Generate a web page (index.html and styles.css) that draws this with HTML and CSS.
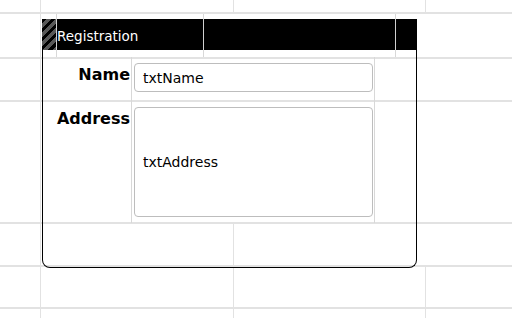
FILE: index.html
```html
<!DOCTYPE html>
<html>
<head>
<meta charset="utf-8">
<link rel="stylesheet" href="styles.css">
</head>
<body>
<div class="canvas">
  <div class="panel">
    <div class="header">
      <div class="grip"></div>
      <div class="hcell title">Registration</div>
      <div class="hcell"></div>
      <div class="hcell"></div>
    </div>
    <div class="body">
      <div class="label">Name</div>
      <div class="field"><div class="textbox name">txtName</div></div>
      <div class="spare"></div>
      <div class="label">Address</div>
      <div class="field"><div class="textbox address">txtAddress</div></div>
      <div class="spare"></div>
    </div>
  </div>
</div>
</body>
</html>
```

FILE: styles.css
```css
html, body {
  margin: 0;
  padding: 0;
  background: #fff;
}

.canvas {
  --g: #e2e2e2;
  --c: #d8d8d8;
  position: relative;
  width: 512px;
  height: 318px;
  overflow: hidden;
  font-family: "DejaVu Sans", Verdana, sans-serif;
  background:
    linear-gradient(var(--g), var(--g)) 0 12px / 100% 2px no-repeat,
    linear-gradient(var(--g), var(--g)) 0 57px / 100% 2px no-repeat,
    linear-gradient(var(--g), var(--g)) 0 100px / 100% 2px no-repeat,
    linear-gradient(var(--g), var(--g)) 0 222px / 100% 2px no-repeat,
    linear-gradient(var(--g), var(--g)) 0 265px / 100% 2px no-repeat,
    linear-gradient(var(--g), var(--g)) 0 307px / 100% 2px no-repeat,
    linear-gradient(var(--g), var(--g)) 40px 0 / 1px 100% no-repeat,
    linear-gradient(var(--g), var(--g)) 233px 0 / 1px 12px no-repeat,
    linear-gradient(var(--g), var(--g)) 233px 222px / 1px 96px no-repeat,
    linear-gradient(var(--g), var(--g)) 425px 0 / 1px 12px no-repeat,
    linear-gradient(var(--g), var(--g)) 425px 265px / 1px 53px no-repeat,
    linear-gradient(var(--c), var(--c)) 56px 12px / 1px 45px no-repeat,
    linear-gradient(var(--c), var(--c)) 203px 12px / 1px 45px no-repeat,
    linear-gradient(var(--c), var(--c)) 395px 12px / 1px 45px no-repeat,
    #fff;
}

.panel {
  position: absolute;
  left: 42px;
  top: 19px;
  width: 375px;
  display: flex;
  flex-direction: column;
}

.header {
  height: 31px;
  background: #000;
  display: grid;
  grid-template-columns: 14px 147px 192px 1fr;
}

.grip {
  background: repeating-linear-gradient(135deg, #000 0 3px, #585858 3px 6.5px);
}

.hcell {
  border-left: 1px solid #d0d0d0;
}

.title {
  color: #fff;
  font-size: 13.5px;
  display: flex;
  align-items: center;
  padding-top: 3px;
  white-space: nowrap;
}

.body {
  box-sizing: border-box;
  height: 218px;
  padding-top: 7px;
  border: 1px solid #000;
  border-top: none;
  border-radius: 0 0 8px 8px;
  display: grid;
  grid-template-columns: 89px 243px 1fr;
  grid-template-rows: 44px 122px;
  align-content: start;
}

.label {
  border-right: 1px solid var(--c);
  text-align: right;
  font-weight: bold;
  font-size: 16px;
  line-height: 19px;
  padding: 8px 1px 0 0;
  color: #000;
}

.field {
  border-right: 1px solid var(--c);
  padding: 6px 0 0 2px;
}

.textbox {
  box-sizing: border-box;
  width: 239px;
  background: #fff;
  border: 1px solid #bdbdbd;
  border-radius: 4px;
  display: flex;
  align-items: center;
  padding-left: 8px;
  font-size: 14px;
  color: #000;
}

.textbox.name {
  height: 29px;
  padding-top: 1px;
}

.textbox.address {
  height: 110px;
}
```
